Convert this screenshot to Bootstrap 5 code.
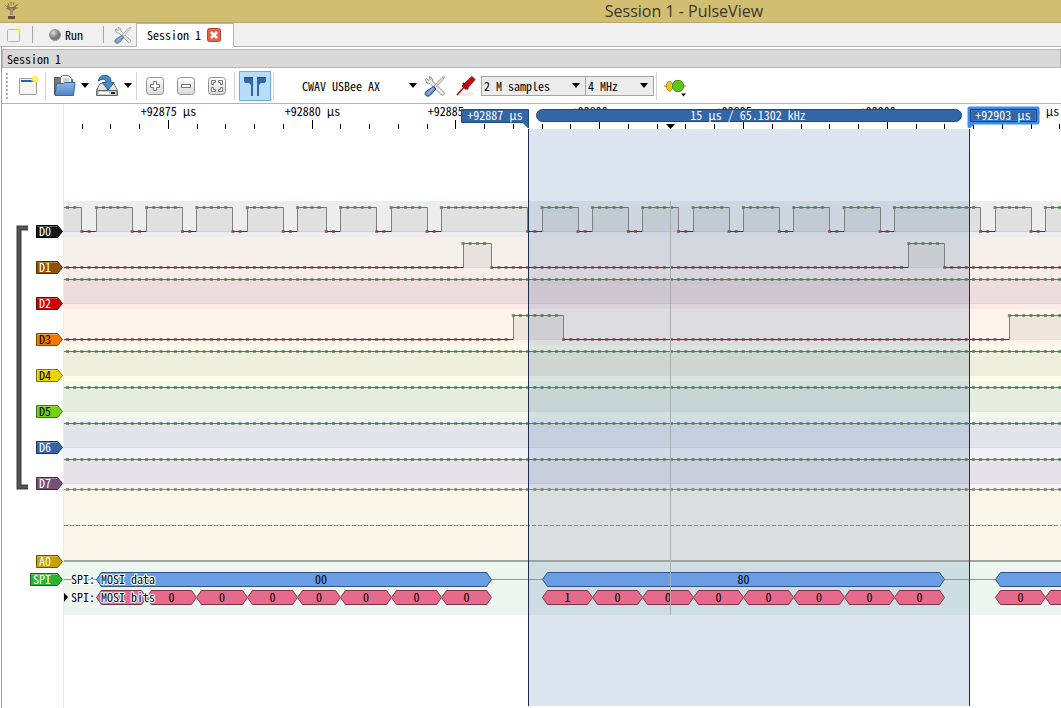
<!DOCTYPE html>
<html lang="en">
<head>
<meta charset="utf-8">
<meta name="viewport" content="width=device-width, initial-scale=1">
<title>Session 1 - PulseView</title>
<link href="https://cdn.jsdelivr.net/npm/bootstrap@5.3.0/dist/css/bootstrap.min.css" rel="stylesheet">
<style>
  body, button, select { font-family: "Noto Sans CJK SC", "DejaVu Sans Mono", monospace; font-feature-settings: "hwid"; font-size: 12px; line-height: 16px; color: #000; }
  svg { display: block; flex: none; }
  svg text { font-size: 12px; }
  .title-bar { height: 23px; background: #d2be70; border-bottom: 1px solid #b9aa6c; }
  .app-title { font: 16px/22px "Open Sans", sans-serif; color: #3b3829; padding-left: calc(57vw - 20px); }
  .tab-row { height: 24px; background: #f0f0f0; border-bottom: 1px solid #b4b4b4; }
  .flat { border: 0; background: none; padding: 0; display: flex; align-items: center; justify-content: center; color: #000; }
  .rule { width: 1px; background: #a8a8a8; }
  .rule-run { margin: 0 10px 0 20px; }
  .doc-tab { background: #fff; border: 1px solid #b4b4b4; border-bottom: 0; width: 98px; height: 24px; margin-left: 4px; padding: 0 12px 0 10px; }
  .session { border-left: 1px solid #a0a0a0; margin-left: 1px; }
  .dock-title { background: #d9d9d9; border: 1px solid #b8b8b8; height: 19px; margin: 2px 0 0; padding-left: 4px; font-size: 12px; font-weight: 400; line-height: 18px; }
  .tools { height: 36px; border-bottom: 1px solid #b0b5ac; }
  .grip { width: 2px; height: 26px; margin-left: 4px; border-left: 2px dotted #b0b0b0; }
  .tool { width: 31px; height: 30px; }
  .drop { width: 12px; height: 30px; }
  .sep { width: 1px; height: 28px; margin: 0 2px; background: #d4d4d4; }
  .tool.on { background: #b9dcfb; border: 1px solid #6aaee8; width: 32px; margin-left: 2px; }
  .device { width: 143px; padding: 0 2px 0 26px; }
  .pick { height: 20px; border: 1px solid #a4a4a4; border-radius: 0; padding: 0 18px 0 2px; line-height: 18px; font-size: 12px; color: #000;
    background: #ececec url("data:image/svg+xml,%3Csvg xmlns='http://www.w3.org/2000/svg' width='8' height='5'%3E%3Cpath d='M0 0h8L4 5z'/%3E%3C/svg%3E") no-repeat right 5px center; }
  .depth { width: 105px; }
  .rate { width: 69px; margin-left: -1px; }
  .gutter { border-right: 1px solid #ececec; width: 62px; }
  .plot { overflow-x: clip; min-width: 0; }
  .ruler { overflow: visible; }
  .traces { margin-bottom: 2px; }
</style>
</head>
<body class="vh-100 d-flex flex-column overflow-hidden bg-white">
<svg width="0" height="0" class="position-absolute" aria-hidden="true">
  <defs>
    <linearGradient id="gKey" x2="0" y2="1"><stop stop-color="#fff"/><stop offset="1" stop-color="#d8d8d8"/></linearGradient>
    <radialGradient id="gBall" cx=".35" cy=".3"><stop stop-color="#ddd"/><stop offset="1" stop-color="#777"/></radialGradient>
    <radialGradient id="gSun"><stop stop-color="#fff95a"/><stop offset=".5" stop-color="#fbf04a"/><stop offset="1" stop-color="#fdf47a" stop-opacity="0"/></radialGradient>
    <linearGradient id="gFold" x2="0" y2="1"><stop stop-color="#8fb7e4"/><stop offset="1" stop-color="#4a84c6"/></linearGradient>
    <symbol id="wrench" viewBox="0 0 22 22">
      <path d="M5 1.500l3 1.500.5 3L20 17.500c1 1.500-1 3.500-2.500 2.500L6 8.500 3 8 1.500 5l1-1.500L5 5.500l1.300-1.300z" fill="#f1f1ef" stroke="#8b8d88"/>
      <path d="M20.500 1.500l-2.500 1-8 8.500 1.500 1.500 8-8.500z" fill="#e6e6e4" stroke="#888a85" stroke-width=".8"/>
      <path d="M9.500 11.500l2.500 2.500-5.500 6c-1.500 1.500-3 1.500-4.500.5s-1-3 0-4z" fill="#5c8bbd" stroke="#2b4f80"/>
      <path d="M9 13.500l-5.500 5.500" stroke="#a9c5e6" stroke-width="1.200"/>
    </symbol>
  </defs>
</svg>

<header class="title-bar d-flex align-items-center flex-shrink-0">
  <svg class="ms-1" width="16" height="20" viewBox="0 0 16 20"><path d="M1 4l2 2M2 8l3-1M4 2l1 3M7 1v3M10 1L9 4M14 3l-3 3M14 7l-3 0" stroke="#8f7c3f"/><path d="M3 4c0 4 2 5 3 6v4h3v-4c2-1 3-2 3-6L9 6H6z" fill="#8a7048"/><path d="M6 7h3v7H6z" fill="#ad8874"/><path d="M4 15h7v3H4z" fill="#675239"/></svg>
  <h1 class="app-title m-0 text-nowrap">Session 1 - PulseView</h1>
</header>

<nav class="tab-row d-flex align-items-center flex-shrink-0">
  <button class="flat ms-1" aria-label="New session"><svg width="20" height="20" viewBox="0 0 20 20"><rect x="3.500" y="4.500" width="12" height="12" rx="1" fill="#f3f3f1" stroke="#b4b4b0"/><circle cx="14.500" cy="5" r="3.500" fill="url(#gSun)" opacity=".6"/></svg></button>
  <span class="rule ms-2 h-75"></span>
  <button class="flat ms-3"><svg class="me-1" width="12" height="12"><circle cx="6" cy="6" r="5.500" fill="url(#gBall)" stroke="#999"/></svg>Run</button>
  <span class="rule rule-run h-75"></span>
  <button class="flat" aria-label="Settings"><svg width="18" height="18" opacity=".85"><use href="#wrench" width="18" height="18"/></svg></button>
  <div class="doc-tab d-flex align-items-center justify-content-between">
    <a href="#session" class="text-reset text-decoration-none text-nowrap">Session 1</a>
    <button class="flat" aria-label="Close tab"><svg width="14" height="14"><rect x=".5" y=".5" width="13" height="13" rx="2" fill="#e0654a" stroke="#b8452c"/><path d="M4 4l6 6M10 4l-6 6" stroke="#fff" stroke-width="2.500"/></svg></button>
  </div>
</nav>

<main id="session" class="session flex-grow-1 d-flex flex-column">
  <h2 class="dock-title flex-shrink-0">Session 1</h2>
  <div class="tools d-flex align-items-center flex-shrink-0" role="toolbar">
    <span class="grip"></span>
    <button class="flat tool ms-1" aria-label="New"><svg width="24" height="24" viewBox="0 0 24 24"><rect x="3.500" y="4.500" width="17" height="16" rx="1" fill="#f4f4f2" stroke="#9a9a96"/><path d="M5 6h14v2H5z" fill="#2f60a8"/><circle cx="19" cy="5" r="4.500" fill="url(#gSun)"/></svg></button>
    <span class="sep"></span>
    <button class="flat tool" aria-label="Open"><svg width="24" height="24" viewBox="0 0 24 24"><path d="M2.500 20.500v-17h6l1 2h11v15z" fill="#777b77" stroke="#555"/><path d="M8.500 3.500l2-2h6l3 3v7h-11z" fill="#f7f7f7" stroke="#777"/><path d="M11 5h6M11 7h6" stroke="#aaa"/><path d="M3 21.500l1.500-12h7l1-1h10.500l-1.500 13z" fill="url(#gFold)" stroke="#3465a4"/></svg></button>
    <button class="flat drop" aria-label="Open menu"><svg width="8" height="5"><path d="M0 0h8L4 5z"/></svg></button>
    <button class="flat tool" aria-label="Save"><svg width="24" height="24" viewBox="0 0 24 24"><path d="M5 9.500h14l3.500 7v5H1.500v-5z" fill="#e4e4e2" stroke="#777a75"/><path d="M2 16.500h20v5H2z" fill="#d0d2ce" stroke="#666"/><path d="M4 19h10" stroke="#fff" stroke-width="2"/><path d="M16 19h4" stroke="#222" stroke-width="2"/><path d="M3.500 7C4 2 8 1 11 1.500c4 .5 5 3 5 7h3L13 16 7.500 8.500H11C11 5 8 4 3.500 7z" fill="#4a8bc0" stroke="#225b8c"/></svg></button>
    <button class="flat drop" aria-label="Save menu"><svg width="8" height="5"><path d="M0 0h8L4 5z"/></svg></button>
    <span class="sep"></span>
    <button class="flat tool" aria-label="Zoom in"><svg width="20" height="20"><rect x="1.500" y="1.500" width="17" height="17" rx="3" fill="url(#gKey)" stroke="#929292"/><path d="M8.500 5.500h3v3h3v3h-3v3h-3v-3h-3v-3h3z" fill="#fff" stroke="#777"/></svg></button>
    <button class="flat tool" aria-label="Zoom out"><svg width="20" height="20"><rect x="1.500" y="1.500" width="17" height="17" rx="3" fill="url(#gKey)" stroke="#929292"/><path d="M5.500 8.500h9v3h-9z" fill="#fff" stroke="#777"/></svg></button>
    <button class="flat tool" aria-label="Zoom to fit"><svg width="20" height="20"><rect x="1.500" y="1.500" width="17" height="17" rx="3" fill="url(#gKey)" stroke="#929292"/><path d="M4.500 8.500v-4h4v2h-2v2zM11.500 4.500h4v4h-2v-2h-2zM4.500 11.500h2v2h2v2h-4zM15.500 11.500v4h-4v-2h2v-2z" fill="#fff" stroke="#777"/></svg></button>
    <span class="sep"></span>
    <button class="flat tool on" aria-label="Show cursors" aria-pressed="true"><svg width="24" height="24"><path d="M1 3h9v19H8V11L6 9H2L1 7z" fill="#3465a4"/><path d="M23 3h-9v19h2V11l2-2h4l1-2z" fill="#3465a4"/><path d="M1 3.500h9M14 3.500h9" stroke="#204a87"/></svg></button>
    <span class="sep"></span>
    <button class="flat device justify-content-between">CWAV USBee AX<svg width="8" height="5"><path d="M0 0h8L4 5z"/></svg></button>
    <button class="flat tool" aria-label="Configure device"><svg width="22" height="22"><use href="#wrench" width="22" height="22"/></svg></button>
    <button class="flat tool" aria-label="Configure channels"><svg width="24" height="24" viewBox="0 0 24 24"><ellipse cx="11" cy="20" rx="9" ry="2" fill="#000" opacity=".08"/><path d="M3 21l8-9" stroke="#b01010" stroke-width="1.600"/><path d="M8 12l2-2 8-7.500 3 3-7 8-2 2z" fill="#cc0808" stroke="#920000"/><path d="M9 9l5 6" stroke="#a00000" stroke-width="2"/></svg></button>
    <select class="pick form-select depth" aria-label="Sample count"><option>2 M samples</option></select>
    <select class="pick form-select rate" aria-label="Sample rate"><option>4 MHz</option></select>
    <span class="sep"></span>
    <button class="flat tool" aria-label="Add decoder"><svg width="26" height="24" viewBox="0 0 26 24"><path d="M2 12h22" stroke="#777"/><path d="M6.500 7.500h2l2 2.500v4l-2 3h-2l-2-3v-4z" fill="#f0c419" stroke="#b8920a"/><path d="M13.500 6.500h5l3 3.500v4l-3 3.500h-5l-3-3.500v-4z" fill="#5fc416" stroke="#49950f"/><path d="M19 19.500h5l-2.500 3z"/></svg></button>
  </div>

  <div class="d-flex flex-grow-1">
    <svg class="gutter h-100" id="gutter" role="img" aria-label="Channels"></svg>
    <div class="plot flex-grow-1 d-flex flex-column">
      <svg class="ruler w-100" height="25" id="ruler" role="img" aria-label="Time scale"></svg>
      <svg class="traces w-100 flex-grow-1" id="traces" role="img" aria-label="Traces"></svg>
    </div>
  </div>
</main>

<script src="https://cdn.jsdelivr.net/npm/bootstrap@5.3.0/dist/js/bootstrap.bundle.min.js"></script>
<script>
  const ORIGIN = 3, PITCH = 7.19;              // first sample and pixels per sample
  const COUNT = Math.ceil(Math.max(innerWidth, 1061) / PITCH) + 8;
  const at = k => +(ORIGIN + PITCH * k).toFixed(1);
  const px = k => Math.round(at(k)) + .5;
  const CUR1 = 464.5, CUR2 = 905.5, HOVER = 606.5;

  // Logic channels: each edge is the sample where the level toggles
  const clock = [2,4,9,11,16,18,23,25,30,32,36,38,43,45,50,52,64,66,71,73,78,80,85,87,92,94,99,101,106,108,113,115,127,129,134,136,141,143];
  const channels = [
    { name: 'D0', bg: '#ededed', tag: '#16191a', edge: '#000', ink: '#fff', start: 1, edges: clock },
    { name: 'D1', bg: '#f5f0ea', tag: '#8f5202', edge: '#4d2c00', ink: '#fff', start: 0, edges: [55,59,117,122] },
    { name: 'D2', bg: '#fceaea', tag: '#cc0000', edge: '#6d0000', ink: '#fff', start: 1, edges: [] },
    { name: 'D3', bg: '#fef3ea', tag: '#f57900', edge: '#834100', ink: '#000', start: 0, edges: [62,69,131] },
    { name: 'D4', bg: '#fefcea', tag: '#edd400', edge: '#7e7100', ink: '#000', start: 1, edges: [] },
    { name: 'D5', bg: '#f2fbec', tag: '#73d216', edge: '#3c700b', ink: '#000', start: 1, edges: [] },
    { name: 'D6', bg: '#f0f2f8', tag: '#3465a4', edge: '#1b3658', ink: '#fff', start: 1, edges: [] },
    { name: 'D7', bg: '#f4f1f6', tag: '#75507b', edge: '#3e2a42', ink: '#fff', start: 1, edges: [] }
  ];

  // Channel tags
  const tag = (x, y, name, fill, edge, ink) =>
    `<path d="M${x}.500 ${y - 6}.500H55.500L60.500 ${y}.500L55.500 ${y + 6}.500H${x}.500z" fill="${fill}" stroke="${edge}"/>` +
    `<path d="M${x + 1}.500 ${y - 5}.500H55" stroke="#fff" opacity=".3"/>` +
    `<text x="${x + 3}" y="${y + 5}" fill="${ink}">${name}</text>`;
  let g = '<path d="M26 124H17V383H26" fill="none" stroke="#444" stroke-width="5"/><path d="M26 124H17V383H26" fill="none" stroke="#666" stroke-width="1"/>';
  channels.forEach((c, i) => g += tag(34, 127 + 36 * i, c.name, c.tag, c.edge, c.ink));
  g += tag(34, 457, 'A0', '#c4a000', '#685500', '#fff') + tag(28, 475, 'SPI', '#2fb135', '#126b17', '#fff');
  document.getElementById('gutter').innerHTML = g;

  // Ruler
  let r = '';
  for (let n = -3; n * 28.76 + 104 < COUNT * PITCH; n++) {
    const x = Math.floor(104.3 + n * 28.76) + .5, major = n % 5 === 0;
    r += `<path d="M${x} ${major ? 16 : 20}V25" stroke="#000"/>`;
    if (major) r += `<text x="${x}" y="12" text-anchor="middle">+${92875 + n} μs</text>`;
  }
  r += `<path d="M397.500 5.500H464.500V24L459 18.500H397.500z" fill="#3465a4" stroke="#1d4a87"/><text x="431" y="16" fill="#fff" text-anchor="middle">+92887 μs</text>`;
  r += `<rect x="472.500" y="5.500" width="425" height="12" rx="6" fill="#3465a4" stroke="#1d4a87"/><text x="684" y="16" fill="#fff" text-anchor="middle">15 μs / 65.1302 kHz</text>`;
  r += `<path d="M905.500 4.500H973.500V18.500H910L905.500 22z" fill="#3465a4" stroke="#3a8df0" stroke-width="4" stroke-linejoin="round"/><path d="M906.500 5.500H972.500V17.500H906.500z" fill="none" stroke="#173f7a"/><text x="939" y="16" fill="#fff" text-anchor="middle">+92903 μs</text>`;
  r += '<path d="M602 20h9l-4.500 5z"/>';
  document.getElementById('ruler').innerHTML = r;

  // Traces
  let bands = '', waves = '';
  const dots = (a, b, y, col) => `<path d="M${at(a) - 1} ${y}H${at(b) - 2}" stroke="${col}" stroke-width="3" stroke-dasharray="3 ${PITCH - 3}" opacity=".75"/>`;
  channels.forEach((c, i) => {
    const hi = 78.5 + 36 * i, lo = hi + 24;
    bands += `<rect y="${hi - 6.5}" width="100%" height="36" fill="${c.bg}"/>`;
    bands += `<path d="M0 ${lo}H4000" stroke="${c.tag}" opacity=".1"/>`;
    const stops = [-1, ...c.edges, COUNT];
    let level = c.start;
    for (let s = 0; s < stops.length - 1; s++) {
      const a = stops[s], b = stops[s + 1], y = level ? hi : lo;
      if (level) waves += `<rect x="${px(a)}" y="${hi}" width="${px(b) - px(a)}" height="24" fill="#000" opacity=".055"/>`;
      if (s) waves += `<path d="M${px(a)} ${hi}V${lo}" stroke="#808080"/>`;
      waves += `<path d="M${px(a)} ${y}H${px(b)}" stroke="${level ? '#1fa42a' : '#9c101c'}"/>`;
      waves += dots(a, b, y, level ? '#4f7d50' : '#7c4a4a');
      level = 1 - level;
    }
  });
  bands += '<rect y="360" width="100%" height="72" fill="#faf7ea"/><rect y="432" width="100%" height="54" fill="#ecf6ee"/>';
  const cursor = `<rect x="${CUR1}" width="${CUR2 - CUR1}" height="100%" fill="#3465a4" opacity=".17"/>`;
  waves += '<path d="M0 360.500H4000" stroke="#a8953a"/>' + dots(0, COUNT, 360.5, '#7f7a58');
  waves += '<path d="M0 396.500H4000" stroke="#80857a" stroke-dasharray="4 2"/><path d="M0 432H4000" stroke="#a0a59e" stroke-width="2"/>';
  waves += '<path d="M0 450.500H4000" stroke="#8d9a92"/>';

  // Decoder annotations; a label is centred on the part right of the row name
  const box = (a, b, y, fill, edge, label, from = a) => {
    const l = px(a), e = px(b);
    return `<path d="M${l} ${y}L${l + 5} ${y - 7}H${e - 5}L${e} ${y}L${e - 5} ${y + 7}H${l + 5}z" fill="${fill}" stroke="${edge}"/>` +
      `<text x="${(px(from) + e) / 2}" y="${y + 4.5}" text-anchor="middle">${label}</text>`;
  };
  const data = (a, b, t, from) => box(a, b, 450.5, '#6a9de4', '#2f5288', t, from);
  const bits = (edges, t) => edges.slice(1).map((b, i) => box(edges[i], b, 468.5, '#e66a8b', '#7d3449', t[i])).join('');
  waves += data(4, 59, '00', 11.5) + data(66, 122, '80') + data(129, 184, '');
  waves += bits([4,11,18,25,32,38,45,52,59], [' ',0,0,0,0,0,0,0]);
  waves += bits([66,73,80,87,94,101,108,115,122], [1,0,0,0,0,0,0,0]);
  waves += bits([129,136,143,150], [0,0,0]);
  const rowName = (y, t) => `<text x="7" y="${y}" stroke="#fff" stroke-width="2" stroke-linejoin="round" paint-order="stroke">SPI: ${t}</text>`;
  waves += rowName(455, 'MOSI data') + rowName(473, 'MOSI bits') + '<path d="M0 464l4 4-4 5z"/>';
  waves += `<path d="M${HOVER} 72V486" stroke="#a9aeae"/>`;
  waves += `<path d="M${CUR1} 0V4000M${CUR2} 0V4000" stroke="#1d2f4d"/>`;
  document.getElementById('traces').innerHTML = bands + cursor + waves;
</script>
</body>
</html>
